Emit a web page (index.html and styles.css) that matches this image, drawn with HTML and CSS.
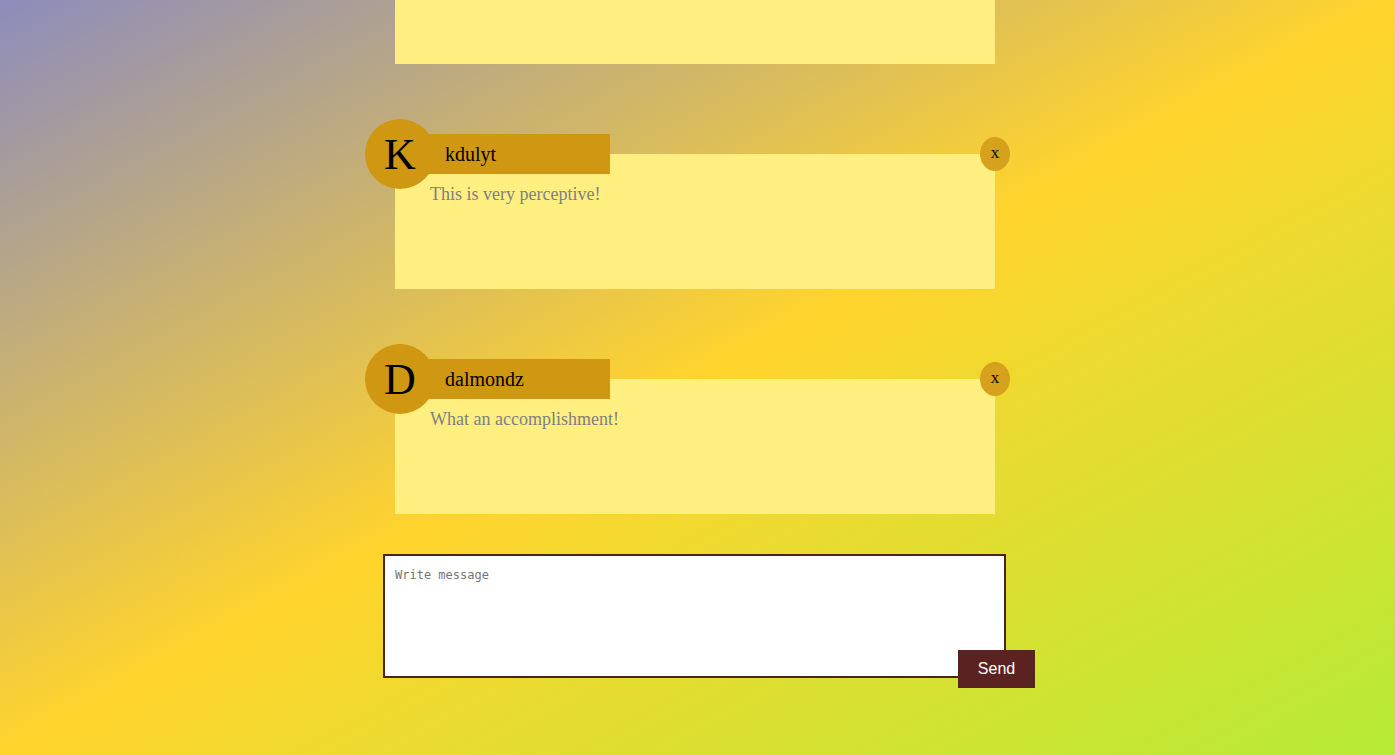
FILE: index.html
```html
<!DOCTYPE html>
<html>
<head>
<meta charset="utf-8">
<title>Chat</title>
<link rel="stylesheet" href="styles.css">
</head>
<body>
<div class="screen">
  <div class="column">
    <div class="thread">
      <div class="msg">
        <div class="msg-head">
          <div class="avatar"></div>
          <div class="name"></div>
        </div>
        <div class="msg-body"></div>
      </div>
      <div class="msg">
        <div class="msg-head">
          <div class="avatar">K</div>
          <div class="name">kdulyt</div>
        </div>
        <div class="msg-body">This is very perceptive!</div>
        <button class="close">x</button>
      </div>
      <div class="msg">
        <div class="msg-head">
          <div class="avatar">D</div>
          <div class="name">dalmondz</div>
        </div>
        <div class="msg-body">What an accomplishment!</div>
        <button class="close">x</button>
      </div>
    </div>
    <form class="composer">
      <textarea class="input" placeholder="Write message"></textarea>
      <button type="button" class="send">Send</button>
    </form>
  </div>
</div>
</body>
</html>
```
FILE: styles.css
```css
html, body {
  margin: 0;
  padding: 0;
}
body {
  font-family: "Liberation Serif", "Times New Roman", serif;
}
.screen {
  height: 100vh;
  overflow: hidden;
  background: linear-gradient(to bottom right, #8d8cbc 0%, #ffd42d 50%, #b6eb35 100%);
  display: flex;
  flex-direction: column;
  justify-content: flex-end;
}
.column {
  width: 645px;
  margin: 0 auto;
  padding-bottom: 77px;
  display: flex;
  flex-direction: column;
  flex-shrink: 0;
}
.thread {
  display: flex;
  flex-direction: column;
  gap: 70px;
}
.msg {
  position: relative;
  width: 600px;
  margin-left: 20px;
  flex-shrink: 0;
}
.msg-head {
  position: relative;
  z-index: 1;
  display: flex;
  align-items: center;
  height: 40px;
  margin-left: -30px;
  margin-bottom: -20px;
}
.avatar {
  position: relative;
  z-index: 2;
  flex: none;
  width: 70px;
  height: 70px;
  margin: -15px 0;
  border-radius: 50%;
  background: #cf9712;
  color: #000;
  font-size: 44px;
  display: flex;
  align-items: center;
  justify-content: center;
}
.name {
  height: 40px;
  width: 210px;
  margin-left: -35px;
  padding-left: 45px;
  box-sizing: border-box;
  background: #cf9712;
  color: #000;
  font-size: 20px;
  display: flex;
  align-items: center;
}
.msg-body {
  height: 135px;
  box-sizing: border-box;
  padding: 30px 35px 0;
  background: #ffee80;
  color: #808080;
  font-size: 18px;
}
.close {
  position: absolute;
  z-index: 3;
  top: 3px;
  right: -15px;
  width: 30px;
  height: 34px;
  padding: 0 0 3px;
  border: none;
  border-radius: 50%;
  background: #d6a21d;
  color: #000;
  font-family: "Liberation Serif", "Times New Roman", serif;
  font-size: 17px;
  line-height: 1;
  display: flex;
  align-items: center;
  justify-content: center;
}
.composer {
  position: relative;
  margin: 40px 0 0 8px;
  width: 623px;
  height: 124px;
  flex-shrink: 0;
}
.input {
  display: block;
  width: 623px;
  height: 124px;
  box-sizing: border-box;
  margin: 0;
  padding: 12px 10px 10px;
  border: 2px solid #4e2416;
  background: #fff;
  font-family: "DejaVu Sans Mono", monospace;
  font-size: 12px;
  resize: none;
  outline: none;
}
.input::placeholder {
  color: #757575;
}
.send {
  position: absolute;
  right: -29px;
  bottom: -10px;
  width: 77px;
  height: 38px;
  padding: 0;
  border: none;
  background: #5b2222;
  color: #fff;
  font-family: "Liberation Sans", Arial, sans-serif;
  font-size: 16px;
}
```
